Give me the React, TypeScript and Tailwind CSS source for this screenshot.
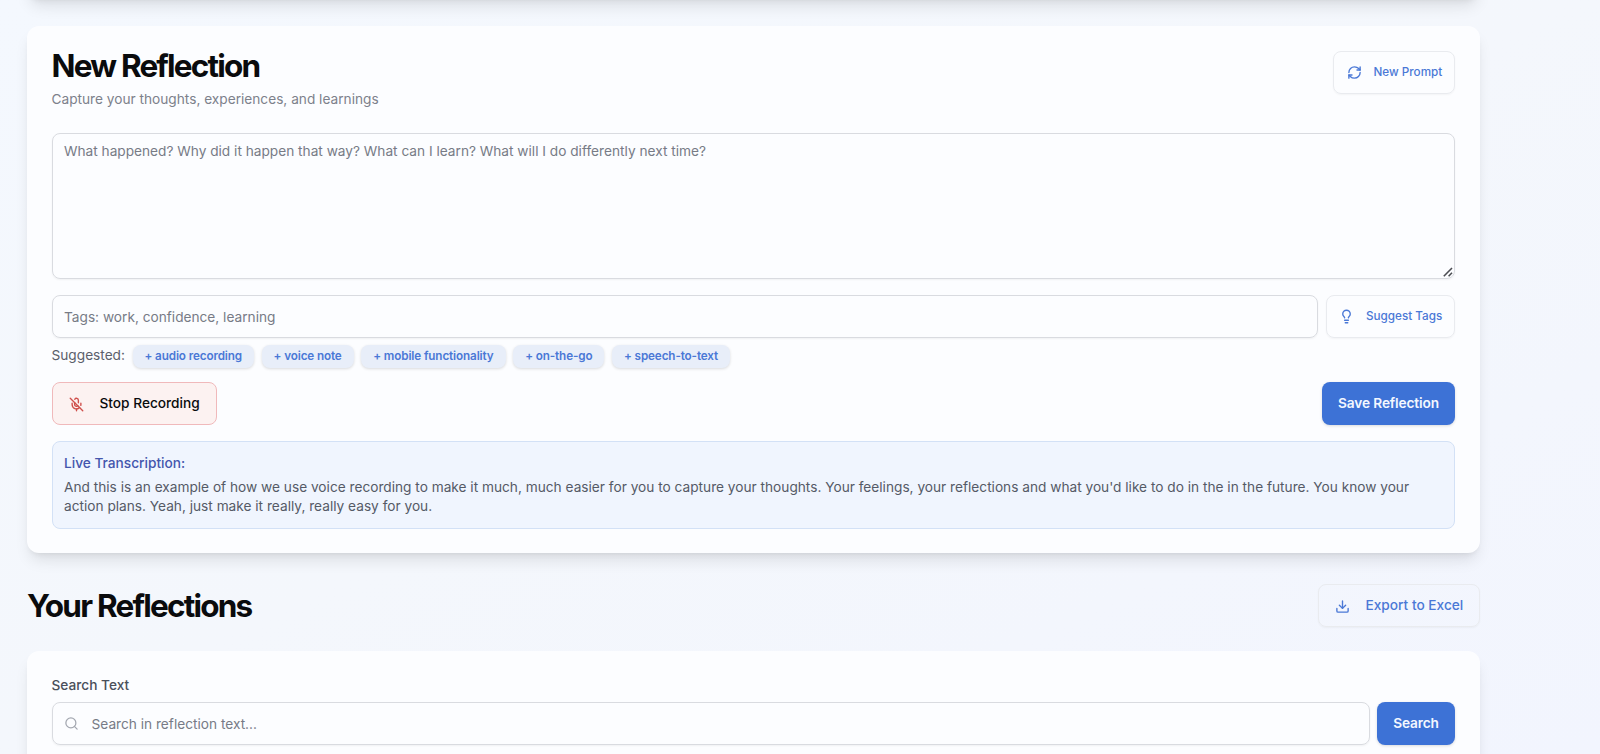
import type { ReactNode } from 'react'
import { useState } from 'react'
import { Download, Lightbulb, MicOff, RefreshCw, Search } from 'lucide-react'
import clsx from 'clsx'

const SUGGESTED_TAGS = ['audio recording', 'voice note', 'mobile functionality', 'on-the-go', 'speech-to-text']

const TRANSCRIPT =
  "And this is an example of how we use voice recording to make it much, much easier for you to capture your thoughts. Your feelings, your reflections and what you'd like to do in the in the future. You know your action plans. Yeah, just make it really, really easy for you."

interface CardProps {
  children?: ReactNode
  className?: string
}

function Card({ children, className }: CardProps) {
  return (
    <section
      className={clsx(
        'rounded-xl bg-[#fcfdff] pr-[25px] pl-[24.5px] shadow-[0_10px_15px_-3px_rgba(0,0,0,0.1),0_4px_6px_-4px_rgba(0,0,0,0.1)]',
        className,
      )}
    >
      {children}
    </section>
  )
}

interface OutlineButtonProps {
  icon: ReactNode
  children: ReactNode
  className?: string
}

function OutlineButton({ icon, children, className }: OutlineButtonProps) {
  return (
    <button
      type="button"
      className={clsx(
        'flex h-[43px] shrink-0 items-center rounded-lg border border-[#e9ebef] font-medium text-[#4a78d6] shadow-[0_1px_2px_rgba(0,0,0,0.04)]',
        className,
      )}
    >
      {icon}
      {children}
    </button>
  )
}

export default function App() {
  const [text, setText] = useState('')
  const [tags, setTags] = useState('')
  const [query, setQuery] = useState('')

  const addTag = (tag: string) => setTags(tags ? `${tags}, ${tag}` : tag)

  return (
    <div className="h-[754px] overflow-hidden bg-linear-to-br from-[#f4f8fe] via-[#f4f7fc] to-[#f2f5fe] font-['Inter',sans-serif] text-sm text-[#0a0b0d]">
      <main className="ml-[27px] w-[1453px]">
        <Card className="-mt-10 h-[39px]" />

        <Card className="mt-[27px] h-[527px] pt-[25px]">
          <div className="flex items-start justify-between">
            <div>
              <h2 className="-mt-px text-[31.5px] leading-[31px] font-bold tracking-[-1.8px]">New Reflection</h2>
              <p className="mt-2 text-[13.68px] leading-5 text-[#7d818b]">Capture your thoughts, experiences, and learnings</p>
            </div>
            <OutlineButton
              icon={<RefreshCw className="mr-[12px] size-[15px]" strokeWidth={2.2} />}
              className="w-[122px] pl-[12.5px] text-[11.7px]"
            >
              New Prompt
            </OutlineButton>
          </div>

          <div className="relative mt-[24px] h-[146px]">
            <textarea
              value={text}
              onChange={(e) => setText(e.target.value)}
              placeholder="What happened? Why did it happen that way? What can I learn? What will I do differently next time?"
              className="block size-full resize-none rounded-lg border border-[#d9dbe0] px-[11.5px] py-[7px] text-[13.68px] leading-5 shadow-[0_1px_2px_rgba(0,0,0,0.05)] outline-none placeholder:text-[#777b86]"
            />
            <svg
              className="pointer-events-none absolute right-[2px] bottom-[2px] size-[10px]"
              viewBox="0 0 10 10"
              stroke="#4b4d52"
              strokeWidth="1.6"
              aria-hidden
            >
              <path d="M0.8 9.2L9 1M5.6 9.2L9 5.8" />
            </svg>
          </div>

          <div className="mt-4 flex gap-2">
            <input
              value={tags}
              onChange={(e) => setTags(e.target.value)}
              placeholder="Tags: work, confidence, learning"
              className="h-[43px] min-w-0 flex-1 rounded-lg border border-[#d9dbe0] px-[11.5px] text-[13.68px] shadow-[0_1px_2px_rgba(0,0,0,0.05)] outline-none placeholder:text-[#777b86]"
            />
            <OutlineButton
              icon={<Lightbulb className="mr-[12px] size-[15px]" strokeWidth={2.2} />}
              className="w-[129px] pl-[12px] text-[11.7px]"
            >
              Suggest Tags
            </OutlineButton>
          </div>

          <div className="mt-[7px] flex h-[23px] items-center gap-[7.6px]">
            <span className="-mt-[1px] text-[13.68px] text-[#5b606b]">Suggested:</span>
            {SUGGESTED_TAGS.map((tag) => (
              <button
                key={tag}
                type="button"
                onClick={() => addTag(tag)}
                className="h-[22.5px] rounded-lg bg-[#e8eef9] px-3 text-[11.7px] font-semibold tracking-[-0.12px] text-[#4a78d6] shadow-[0_1px_3px_rgba(0,0,0,0.14)]"
              >
                + {tag}
              </button>
            ))}
          </div>

          <div className="mt-[14px] flex items-center justify-between">
            <button
              type="button"
              className="flex h-[43px] w-[165px] items-center rounded-lg border border-[#f0b9bb] bg-[#fcf2f1] pt-px pl-4 text-[13.68px] font-medium"
            >
              <MicOff className="mr-4 size-[15px] text-[#cf4f4b]" strokeWidth={2.2} />
              Stop Recording
            </button>
            <button
              type="button"
              className="h-[43px] w-[133px] rounded-lg bg-[#3d72d6] pt-px text-[13.68px] font-semibold tracking-[-0.12px] text-[#f3f7ff] shadow-[0_1px_3px_rgba(0,0,0,0.14)]"
            >
              Save Reflection
            </button>
          </div>

          <div className="mt-4 h-[88px] rounded-lg border border-[#d3e1f6] bg-[#f0f5fe] px-[11.5px] pt-3">
            <p className="text-[13.68px] leading-[19.5px] font-medium text-[#4456ad]">Live Transcription:</p>
            <p className="mt-1 text-[13.68px] leading-[19.5px] text-[#555a66]">{TRANSCRIPT}</p>
          </div>
        </Card>

        <div className="mt-[31px] flex items-center justify-between">
          <h2 className="-mt-px text-[31.5px] leading-[31px] font-bold tracking-[-1.78px]">Your Reflections</h2>
          <OutlineButton
            icon={<Download className="mr-[15.5px] size-[15px]" strokeWidth={2.2} />}
            className="w-[162px] pt-px pl-4 text-[13.68px]"
          >
            Export to Excel
          </OutlineButton>
        </div>

        <Card className="mt-6 h-[160px] pt-6">
          <label htmlFor="search" className="block text-[13.68px] leading-5 font-medium text-[#4a4f5a]">
            Search Text
          </label>
          <div className="mt-[7px] flex gap-[7px]">
            <div className="flex h-[43px] flex-1 items-center rounded-lg border border-[#d9dbe0] pl-[11.5px] shadow-[0_1px_2px_rgba(0,0,0,0.05)]">
              <Search className="mr-[12.5px] size-[15px] text-[#a3a7b0]" strokeWidth={2} />
              <input
                id="search"
                value={query}
                onChange={(e) => setQuery(e.target.value)}
                placeholder="Search in reflection text..."
                className="mt-0.5 flex-1 text-[13.68px] outline-none placeholder:text-[#777b86]"
              />
            </div>
            <button
              type="button"
              className="h-[43px] w-[78px] rounded-lg bg-[#3d72d6] pt-px text-[13.68px] font-semibold tracking-[-0.12px] text-[#f3f7ff] shadow-[0_1px_3px_rgba(0,0,0,0.14)]"
            >
              Search
            </button>
          </div>
        </Card>
      </main>
    </div>
  )
}
